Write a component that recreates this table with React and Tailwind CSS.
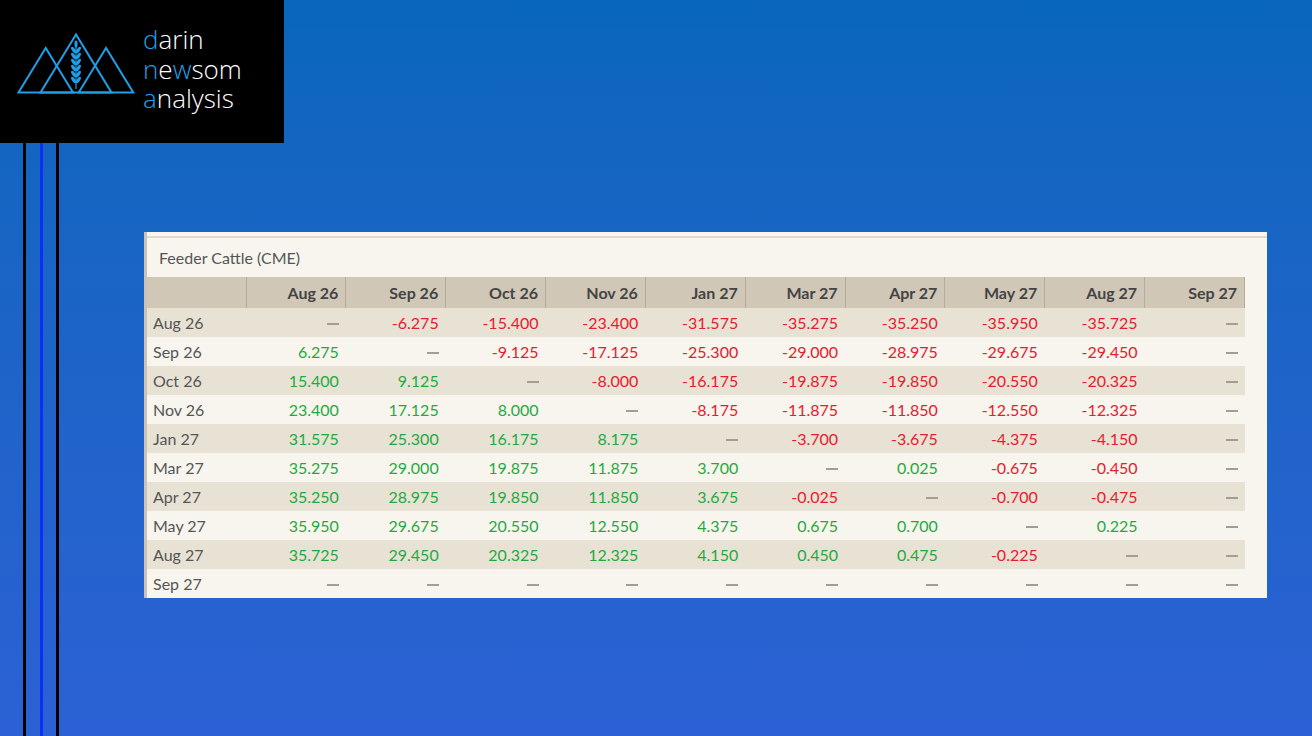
import React from "react";

const months = ["Aug 26", "Sep 26", "Oct 26", "Nov 26", "Jan 27", "Mar 27", "Apr 27", "May 27", "Aug 27", "Sep 27"];

// spread values, null = no value
const rows = [
  [null, "-6.275", "-15.400", "-23.400", "-31.575", "-35.275", "-35.250", "-35.950", "-35.725", null],
  ["6.275", null, "-9.125", "-17.125", "-25.300", "-29.000", "-28.975", "-29.675", "-29.450", null],
  ["15.400", "9.125", null, "-8.000", "-16.175", "-19.875", "-19.850", "-20.550", "-20.325", null],
  ["23.400", "17.125", "8.000", null, "-8.175", "-11.875", "-11.850", "-12.550", "-12.325", null],
  ["31.575", "25.300", "16.175", "8.175", null, "-3.700", "-3.675", "-4.375", "-4.150", null],
  ["35.275", "29.000", "19.875", "11.875", "3.700", null, "0.025", "-0.675", "-0.450", null],
  ["35.250", "28.975", "19.850", "11.850", "3.675", "-0.025", null, "-0.700", "-0.475", null],
  ["35.950", "29.675", "20.550", "12.550", "4.375", "0.675", "0.700", null, "0.225", null],
  ["35.725", "29.450", "20.325", "12.325", "4.150", "0.450", "0.475", "-0.225", null, null],
  [null, null, null, null, null, null, null, null, null, null],
];

const Logo = () => {
  const leaves = [50, 56, 62, 68, 74, 80];
  return (
    <svg width="140" height="143" viewBox="0 0 140 143" className="shrink-0">
      <g fill="none" stroke="#1e9fe8" strokeWidth="2" strokeLinejoin="miter">
        <polygon points="45.7,48 18.5,92.5 73,92.5" />
        <polygon points="76,34.5 40.5,92.5 111.5,92.5" />
        <polygon points="106,48 78.7,92.5 133.3,92.5" />
        <line x1="76" y1="46" x2="76" y2="89" strokeWidth="1.2" />
      </g>
      <g fill="#1e9fe8">
        <ellipse cx="76" cy="44" rx="1.6" ry="3.6" />
        {leaves.map((y) => (
          <g key={y}>
            <ellipse cx="73.6" cy={y} rx="1.6" ry="3.6" transform={`rotate(-35 73.6 ${y})`} />
            <ellipse cx="78.4" cy={y} rx="1.6" ry="3.6" transform={`rotate(35 78.4 ${y})`} />
          </g>
        ))}
      </g>
    </svg>
  );
};

const Cell = ({ v }) => {
  if (v === null) {
    return <span className="inline-block w-[12px] h-[2px] align-middle bg-[#a29e97]" />;
  }
  const neg = v.startsWith("-");
  return <span className={neg ? "text-[#e3202d]" : "text-[#1faa40]"}>{v}</span>;
};

export default function App() {
  return (
    <div
      className="relative w-[1312px] h-[736px] overflow-hidden bg-gradient-to-b from-[#0866bc] to-[#2b61d4]"
      style={{ fontFamily: "Lato, 'Open Sans', sans-serif" }}
    >
      {/* decorative vertical rules */}
      <div className="absolute left-[23px] top-[143px] bottom-0 w-[3px] bg-black" />
      <div className="absolute left-[40px] top-[143px] bottom-0 w-[3px] bg-[#0a30f5]" />
      <div className="absolute left-[56px] top-[143px] bottom-0 w-[3px] bg-black" />

      {/* logo block */}
      <div className="flex w-[284px] h-[143px] bg-black">
        <Logo />
        <div
          className="ml-[3px] pt-[24px] text-white text-[26px] leading-[30px] font-light"
          style={{ fontFamily: "'Open Sans', sans-serif" }}
        >
          <p className="h-[29.5px]"><span className="text-[#1fa0e8]">d</span>arin</p>
          <p className="h-[29.5px]"><span className="text-[#1fa0e8]">n</span>e<span className="text-[#1fa0e8]">w</span>som</p>
          <p className="h-[29.5px]"><span className="text-[#1fa0e8]">a</span>nalysis</p>
        </div>
      </div>

      {/* spread table panel */}
      <div className="ml-[144px] mt-[89px] w-[1123px] h-[366px] bg-[#f8f5ef] border-l-[3px] border-[#cbc3b6]">
        <div className="pt-[4px]">
          <div className="h-[2px] bg-[#dfd9cf]" />
          <div className="h-[39px] flex items-center pl-[12px] text-[16px] text-[#555]">
            Feeder Cattle (CME)
          </div>
        </div>
        <table className="w-[1098px] border-collapse table-fixed text-[16px]">
          <thead>
            <tr className="h-[31px] bg-[#d0c7b7] text-[#444] font-bold">
              <th className="w-[99px] border-r border-[#b4ab9c]"></th>
              {months.map((m) => (
                <th key={m} className="text-right pr-[7px] border-r border-[#b4ab9c] font-bold">
                  {m}
                </th>
              ))}
            </tr>
          </thead>
          <tbody>
            {rows.map((r, i) => (
              <tr key={months[i]} className={`h-[29px] ${i % 2 === 0 ? "bg-[#e8e2d5]" : "bg-[#f8f5ef]"}`}>
                <td className="pl-[6px] text-[#555]">{months[i]}</td>
                {r.map((v, j) => (
                  <td key={j} className="text-right pr-[7px]">
                    <Cell v={v} />
                  </td>
                ))}
              </tr>
            ))}
          </tbody>
        </table>
      </div>
    </div>
  );
}
